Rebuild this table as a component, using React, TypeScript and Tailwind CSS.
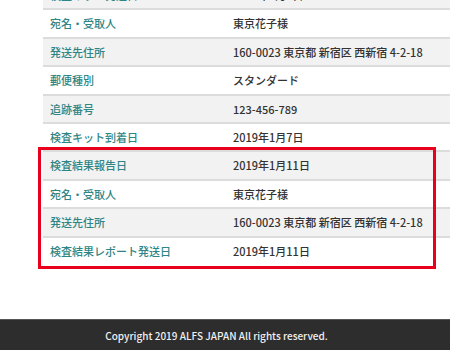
import React from "react";

type Row = { label: string; value: string };

const rows: Row[] = [
  { label: "検査キット発送日", value: "2019年1月5日" },
  { label: "宛名・受取人", value: "東京花子様" },
  { label: "発送先住所", value: "160-0023 東京都 新宿区 西新宿 4-2-18" },
  { label: "郵便種別", value: "スタンダード" },
  { label: "追跡番号", value: "123-456-789" },
  { label: "検査キット到着日", value: "2019年1月7日" },
  { label: "検査結果報告日", value: "2019年1月11日" },
  { label: "宛名・受取人", value: "東京花子様" },
  { label: "発送先住所", value: "160-0023 東京都 新宿区 西新宿 4-2-18" },
  { label: "検査結果レポート発送日", value: "2019年1月11日" },
];

export default function App() {
  return (
    <div
      className="relative w-[450px] h-[350px] overflow-hidden bg-white flex flex-col"
      style={{ fontFamily: '"Noto Sans CJK JP", "Noto Sans", sans-serif' }}
    >
      <div className="flex-1 pl-[43px] mt-[-18px]">
        {rows.map((r, i) => (
          <div
            key={i}
            className={`flex items-center h-[28.4px] text-[11px] font-medium ${
              i % 2 === 0 ? "bg-[#f2f2f2]" : "bg-white"
            } ${i < rows.length - 1 ? "border-b-2 border-[#dcdcdc]" : ""}`}
          >
            <div className="w-[183px] pl-[7px] text-[#2e8585]">{r.label}</div>
            <div className="pl-[7px] text-[#333333]">{r.value}</div>
          </div>
        ))}
      </div>

      {/* highlight frame around the report rows */}
      <div className="absolute left-[38px] top-[147px] w-[398px] h-[122px] border-[3px] border-[#e8001c] pointer-events-none" />

      <footer className="h-[31px] bg-[#2d2d2d] border-t border-[#555555] flex items-center justify-center pr-[17px] text-[10px] font-medium text-[#f0f0f0]">
        Copyright 2019 ALFS JAPAN All rights reserved.
      </footer>
    </div>
  );
}
